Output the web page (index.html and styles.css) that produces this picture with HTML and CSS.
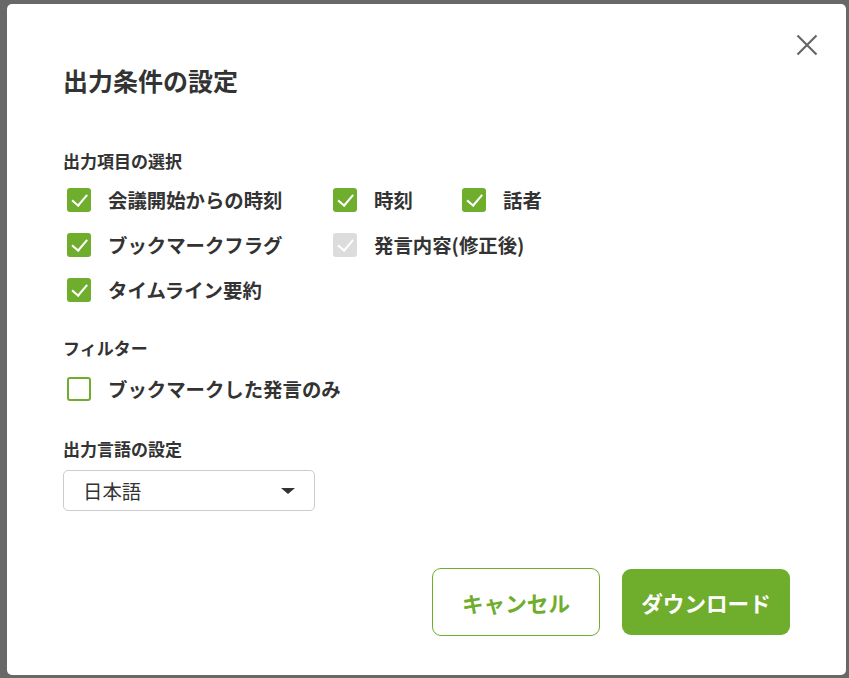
FILE: index.html
```html
<!DOCTYPE html>
<html lang="ja">
<head>
  <meta charset="UTF-8" />
  <title>出力条件の設定</title>
  <link rel="stylesheet" href="styles.css">
</head>
<body>
  <!-- DIALOG -->
  <div class="dialog">
    <button class="close-btn" aria-label="閉じる">
      <svg width="22" height="22" viewBox="0 0 22 22"><path d="M1.5 1.5 L20.5 20.5 M20.5 1.5 L1.5 20.5" stroke="#666" stroke-width="2.2" fill="none"/></svg>
    </button>

    <h1 class="dialog-title">出力条件の設定</h1>

    <!-- output items -->
    <section class="block">
      <h2 class="block-title">出力項目の選択</h2>
      <div class="check-grid">
        <label class="check"><span class="box on"></span>会議開始からの時刻</label>
        <label class="check"><span class="box on"></span>時刻</label>
        <label class="check"><span class="box on"></span>話者</label>
        <label class="check"><span class="box on"></span>ブックマークフラグ</label>
        <label class="check"><span class="box disabled"></span>発言内容(修正後)</label>
        <span></span>
        <label class="check"><span class="box on"></span>タイムライン要約</label>
      </div>
    </section>

    <!-- filter -->
    <section class="block block-filter">
      <h2 class="block-title">フィルター</h2>
      <label class="check"><span class="box"></span>ブックマークした発言のみ</label>
    </section>

    <!-- language -->
    <section class="block">
      <h2 class="block-title">出力言語の設定</h2>
      <div class="select">
        <span>日本語</span>
        <span class="caret"></span>
      </div>
    </section>

    <div class="actions">
      <button class="btn btn-outline">キャンセル</button>
      <button class="btn btn-fill">ダウンロード</button>
    </div>
  </div>
</body>
</html>
```

FILE: styles.css
```css
/* ------------------------------------------------------------
   COLORS
------------------------------------------------------------ */
:root {
  --green: #6fad2d;
  --text: #333333;
  --grey: #dcdcdc;
}

* {
  margin: 0;
  padding: 0;
  box-sizing: border-box;
}
body {
  font-family: "Noto Sans CJK JP", "Noto Sans", sans-serif;
  background-color: #686868;
  color: var(--text);
  padding: 4px 3px 3px 7px;
}

/* ------------------------------------------------------------
   DIALOG
------------------------------------------------------------ */
.dialog {
  position: relative;
  background: #fff;
  width: 839px;
  height: 671px;
  border-radius: 5px;
  padding: 58px 56px 0 56px;
}
.close-btn {
  position: absolute;
  top: 30px;
  right: 28px;
  background: none;
  border: none;
  cursor: pointer;
  line-height: 0;
}
.dialog-title {
  font-size: 25px;
  font-weight: bold;
  line-height: 36px;
  margin-bottom: 51px;
}

.block {
  margin-bottom: 28px;
}
.block-filter {
  margin-bottom: 30px;
}
.block-title {
  font-size: 17px;
  font-weight: bold;
  line-height: 24px;
  margin-bottom: 9px;
}
.block-filter .block-title {
  margin-bottom: 11px;
}

/* ------------------------------------------------------------
   CHECKBOXES
------------------------------------------------------------ */
.check-grid {
  display: grid;
  grid-template-columns: 266px 129px auto;
  row-gap: 9px;
}
.check {
  display: flex;
  align-items: center;
  gap: 17px;
  font-size: 19.4px;
  font-weight: bold;
  line-height: 36px;
  padding-left: 4px;
  white-space: nowrap;
  cursor: pointer;
}
.box {
  width: 24px;
  height: 24px;
  border-radius: 3px;
  border: 2px solid var(--green);
  background: #fff;
  position: relative;
  flex-shrink: 0;
}
.box.on {
  background: var(--green);
}
.box.disabled {
  background: var(--grey);
  border-color: var(--grey);
}
.box.on::after,
.box.disabled::after {
  content: "";
  position: absolute;
  left: 5px;
  top: 1px;
  width: 7px;
  height: 13px;
  border-right: 2.5px solid #fff;
  border-bottom: 2.5px solid #fff;
  transform: rotate(40deg);
  transform-origin: 60% 60%;
}

/* ------------------------------------------------------------
   SELECT
------------------------------------------------------------ */
.select {
  width: 252px;
  height: 41px;
  border: 1px solid #cccccc;
  border-radius: 5px;
  display: flex;
  align-items: center;
  justify-content: space-between;
  padding: 0 19px 0 19px;
  font-size: 19.4px;
}
.caret {
  width: 0;
  height: 0;
  border-left: 7px solid transparent;
  border-right: 7px solid transparent;
  border-top: 6px solid #333;
}

/* ------------------------------------------------------------
   ACTIONS
------------------------------------------------------------ */
.actions {
  display: flex;
  justify-content: flex-end;
  align-items: center;
  gap: 22px;
  margin-top: 57px;
}
.btn {
  width: 168px;
  border-radius: 9px;
  font-family: inherit;
  font-size: 21.6px;
  font-weight: bold;
  cursor: pointer;
}
.btn-outline {
  height: 68px;
  background: #fff;
  color: var(--green);
  border: 1px solid var(--green);
}
.btn-fill {
  height: 66px;
  background: var(--green);
  color: #fff;
  border: none;
}
```
